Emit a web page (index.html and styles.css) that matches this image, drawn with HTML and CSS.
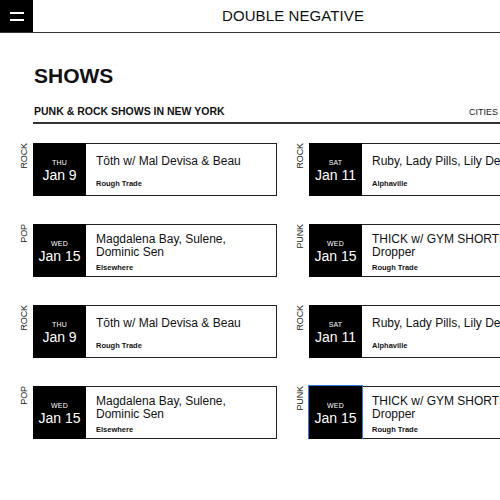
FILE: index.html
```html
<!DOCTYPE html>
<html lang="en">
<head>
<meta charset="utf-8">
<title>Double Negative — Shows</title>
<link rel="stylesheet" href="styles.css">
</head>
<body>
<div class="page">
  <header class="topbar">
    <button class="menu" aria-label="Menu"><span></span><span></span></button>
    <div class="brand">DOUBLE NEGATIVE</div>
    <div class="spacer"></div>
  </header>

  <main class="content">
    <h1 class="heading">SHOWS</h1>
    <div class="subbar">
      <h2 class="subtitle">PUNK &amp; ROCK SHOWS IN NEW YORK</h2>
      <div class="cities">CITIES <svg class="chev" width="8" height="6" viewBox="0 0 8 6"><path d="M1 1.5 L4 4.5 L7 1.5" fill="none" stroke="#222" stroke-width="1.2"/></svg></div>
    </div>

    <div class="grid">
      <div class="item">
        <span class="genre">ROCK</span>
        <div class="card">
          <div class="date"><span class="dow">THU</span><span class="day">Jan 9</span></div>
          <div class="info"><div class="title">Tōth w/ Mal Devisa &amp; Beau</div><div class="venue">Rough Trade</div></div>
        </div>
      </div>
      <div class="item">
        <span class="genre">ROCK</span>
        <div class="card">
          <div class="date"><span class="dow">SAT</span><span class="day">Jan 11</span></div>
          <div class="info"><div class="title">Ruby, Lady Pills, Lily Destiny</div><div class="venue">Alphaville</div></div>
        </div>
      </div>
      <div class="item">
        <span class="genre">POP</span>
        <div class="card">
          <div class="date"><span class="dow">WED</span><span class="day">Jan 15</span></div>
          <div class="info"><div class="title">Magdalena Bay, Sulene, Dominic Sen</div><div class="venue">Elsewhere</div></div>
        </div>
      </div>
      <div class="item">
        <span class="genre">PUNK</span>
        <div class="card">
          <div class="date"><span class="dow">WED</span><span class="day">Jan 15</span></div>
          <div class="info"><div class="title">THICK w/ GYM SHORTS, Dropper</div><div class="venue">Rough Trade</div></div>
        </div>
      </div>

      <div class="item">
        <span class="genre">ROCK</span>
        <div class="card">
          <div class="date"><span class="dow">THU</span><span class="day">Jan 9</span></div>
          <div class="info"><div class="title">Tōth w/ Mal Devisa &amp; Beau</div><div class="venue">Rough Trade</div></div>
        </div>
      </div>
      <div class="item">
        <span class="genre">ROCK</span>
        <div class="card">
          <div class="date"><span class="dow">SAT</span><span class="day">Jan 11</span></div>
          <div class="info"><div class="title">Ruby, Lady Pills, Lily Destiny</div><div class="venue">Alphaville</div></div>
        </div>
      </div>
      <div class="item">
        <span class="genre">POP</span>
        <div class="card">
          <div class="date"><span class="dow">WED</span><span class="day">Jan 15</span></div>
          <div class="info"><div class="title">Magdalena Bay, Sulene, Dominic Sen</div><div class="venue">Elsewhere</div></div>
        </div>
      </div>
      <div class="item">
        <span class="genre">PUNK</span>
        <div class="card">
          <div class="date focused"><span class="dow">WED</span><span class="day">Jan 15</span></div>
          <div class="info"><div class="title">THICK w/ GYM SHORTS, Dropper</div><div class="venue">Rough Trade</div></div>
        </div>
      </div>
    </div>
  </main>
</div>
</body>
</html>
```

FILE: styles.css
```css
* { box-sizing: border-box; }

html, body {
  margin: 0;
  padding: 0;
  background: #fff;
  overflow: hidden;
}

body {
  font-family: "Liberation Sans", Arial, sans-serif;
  color: #111;
}

.page {
  width: 586px;
}

/* Header */
.topbar {
  display: grid;
  grid-template-columns: 33px 1fr 33px;
  align-items: center;
  height: 33px;
  border-bottom: 1px solid #333;
}

.menu {
  width: 33px;
  height: 32px;
  background: #000;
  border: 0;
  padding: 0;
  display: flex;
  flex-direction: column;
  align-items: center;
  justify-content: center;
  gap: 5px;
}

.menu span {
  display: block;
  width: 14px;
  height: 2px;
  background: #fff;
}

.brand {
  text-align: center;
  font-size: 15px;
  line-height: 18px;
  letter-spacing: 0.1px;
  color: #111;
}

/* Content */
.content {
  padding: 0 33px;
}

.heading {
  margin: 31px 0 0 1px;
  font-size: 21px;
  line-height: 24px;
  font-weight: 700;
}

.subbar {
  display: flex;
  justify-content: space-between;
  align-items: baseline;
  margin-top: 17px;
  padding-bottom: 4px;
  border-bottom: 2px solid #333;
}

.subtitle {
  margin: 0 0 0 1px;
  font-size: 10.5px;
  line-height: 12px;
  font-weight: 700;
}

.cities {
  width: 84px;
  font-size: 9px;
  line-height: 12px;
  color: #222;
}

.chev {
  margin-left: 2px;
  vertical-align: middle;
}

/* Grid of shows */
.grid {
  display: grid;
  grid-template-columns: 244px 244px;
  column-gap: 32px;
  row-gap: 28px;
  margin-top: 19px;
}

.item {
  display: flex;
  align-items: flex-start;
  gap: 4px;
  margin-left: -14px;
}

.genre {
  flex: 0 0 10px;
  width: 10px;
  writing-mode: vertical-rl;
  transform: rotate(180deg);
  font-size: 9px;
  line-height: 10px;
  color: #222;
  letter-spacing: -0.1px;
}

.card {
  flex: 1;
  display: flex;
  height: 53px;
  border: 1px solid #222;
  background: #fff;
}

.date {
  flex: 0 0 53px;
  margin: -1px 0 -1px -1px;
  background: #000;
  color: #fff;
  display: flex;
  flex-direction: column;
  align-items: center;
  justify-content: center;
  padding-top: 1px;
}

.date.focused {
  outline: 1px solid #2f7fe6;
  box-shadow: 0 2px 0 0 #a9cff7;
}

.dow {
  font-size: 7px;
  line-height: 8px;
  letter-spacing: 0.2px;
}

.day {
  font-size: 14px;
  line-height: 14px;
  margin-top: 1px;
}

.info {
  flex: 1;
  min-width: 0;
  display: flex;
  flex-direction: column;
  justify-content: space-around;
  padding: 6px 10px 1px 10px;
}

.title {
  font-size: 12px;
  line-height: 12.5px;
  color: #111;
}

.venue {
  font-size: 7.5px;
  line-height: 10px;
  font-weight: 700;
  color: #111;
}
```
